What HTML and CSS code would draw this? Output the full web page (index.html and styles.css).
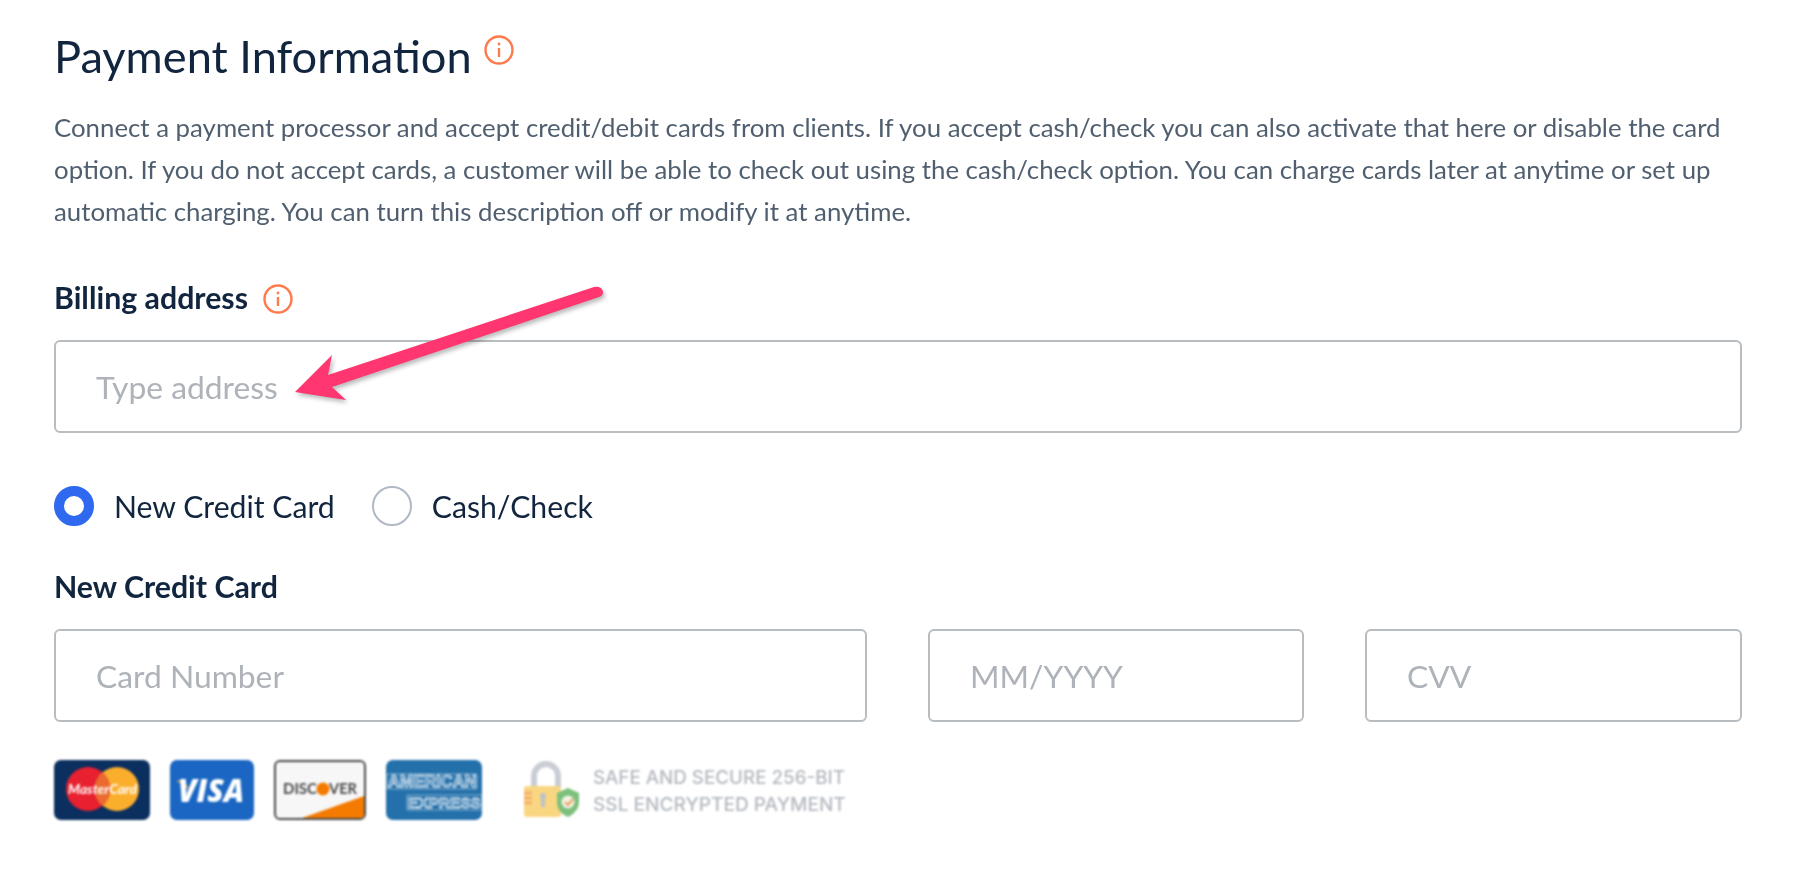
FILE: index.html
```html
<!doctype html>
<html>
	<head>
		<meta charset="utf-8" />
		<title>Payment Information</title>
		<link rel="stylesheet" href="styles.css">
	</head>
	<body>
		<div class="panel">
			<h1 class="title">Payment Information
				<svg class="info info-title" viewBox="0 0 30 30"><circle cx="15" cy="15" r="13.5"/><path d="M15 13v9"/><circle class="dot" cx="15" cy="9" r="1.4"/></svg>
			</h1>
			<p class="desc">Connect a payment processor and accept credit/debit cards from clients. If you accept cash/check you can also activate that here or disable the card option. If you do not accept cards, a customer will be able to check out using the cash/check option. You can charge cards later at anytime or set up automatic charging. You can turn this description off or modify it at anytime.</p>

			<div class="label label-billing">Billing address
				<svg class="info" viewBox="0 0 30 30"><circle cx="15" cy="15" r="13.5"/><path d="M15 13v9"/><circle class="dot" cx="15" cy="9" r="1.4"/></svg>
			</div>
			<input class="field" type="text" placeholder="Type address">

			<div class="radios">
				<label class="radio"><span class="dot-btn on"></span>New Credit Card</label>
				<label class="radio"><span class="dot-btn"></span>Cash/Check</label>
			</div>

			<div class="label">New Credit Card</div>
			<div class="card-row">
				<input class="field" type="text" placeholder="Card Number">
				<input class="field" type="text" placeholder="MM/YYYY">
				<input class="field" type="text" placeholder="CVV">
			</div>

			<div class="logos">
				<svg class="logo logo-mc" viewBox="0 0 96 60">
					<rect width="96" height="60" rx="7" fill="#0b2f5f"/>
					<circle cx="34" cy="29" r="22" fill="#e8202f"/>
					<circle cx="63" cy="29" r="22" fill="#fbae2c"/>
					<path d="M48.500 12a22 22 0 0 1 0 34a22 22 0 0 1 0-34z" fill="#ea6a30"/>
					<text x="14" y="34" textLength="69" lengthAdjust="spacingAndGlyphs" class="mc-text">MasterCard</text>
				</svg>
				<svg class="logo logo-visa" viewBox="0 0 84 60">
					<rect width="84" height="60" rx="7" fill="#1a66c2"/>
					<path d="M6 21c6-1 11 1 13 9c-3-4-7-7-13-9z" fill="#f0b040"/>
					<text x="8" y="42" textLength="66" lengthAdjust="spacingAndGlyphs" class="visa-text">VISA</text>
				</svg>
				<svg class="logo logo-disc" viewBox="0 0 92 60">
					<rect x="1" y="1" width="90" height="58" rx="5" fill="#f7f7f7" stroke="#4a4a4a" stroke-width="2"/>
					<path d="M28 58L90 36v18q0 4-4 4z" fill="#f47a00"/>
					<text x="9" y="34" textLength="34" lengthAdjust="spacingAndGlyphs" class="disc-text">DISC</text>
					<circle cx="49" cy="29" r="6.500" fill="#f47a00"/>
					<text x="55" y="34" textLength="28" lengthAdjust="spacingAndGlyphs" class="disc-text">VER</text>
				</svg>
				<svg class="logo logo-amex" viewBox="0 0 96 60">
					<rect width="96" height="60" rx="7" fill="#2470ab"/>
					<path d="M1 14h90v15H1zM21 35h75v15H21z" fill="none" stroke="#e8f0f6" stroke-width="1" opacity=".5"/>
					<text x="2" y="27" class="amex-text amex-top">AMERICAN</text>
					<text x="22" y="48" class="amex-text amex-bottom">EXPRESS</text>
				</svg>
				<div class="secure">
					<svg class="lock" viewBox="0 0 58 58">
						<path d="M11 28V16a12 12 0 0 1 24 0v12" fill="none" stroke="#c9cdd5" stroke-width="6"/>
						<rect x="1" y="26" width="37" height="31" rx="3" fill="#f9d682"/>
						<path d="M1 33h8M1 38h8M1 43h8" stroke="#f4b06c" stroke-width="3"/>
						<circle cx="20" cy="36" r="3" fill="#bcc2c8"/>
						<path d="M20 36v11" stroke="#bcc2c8" stroke-width="4"/>
						<path d="M45 28l11 5v9c0 7-5 12-11 15c-7-3-11-8-11-15v-9z" fill="#7cc07c"/>
						<circle cx="45" cy="42" r="6.500" fill="#f4f1e4"/>
						<path d="M42 42l3 3l5-6" fill="none" stroke="#e8a060" stroke-width="2"/>
					</svg>
					<div class="secure-text">SAFE AND SECURE 256-BIT<br><span class="secure-line">SSL ENCRYPTED PAYMENT</span></div>
				</div>
			</div>

			<svg class="arrow" viewBox="0 0 320 125">
				<path d="M5 107L42 70L38 90L304 2Q312 1 313 7Q313 11 309 12L42 102L56 115z" fill="#ff3670"/>
			</svg>
		</div>
	</body>
</html>
```

FILE: styles.css
```css
html, body, div, h1, p { margin: 0; padding: 0; }
body { background: #fff; font-family: Lato, "Liberation Sans", sans-serif; color: #11253f; }
.panel { position: relative; height: 878px; box-sizing: border-box; padding: 28px 68px 0 54px; overflow: hidden; filter: blur(0.5px); }

.title { font-size: 45.200px; line-height: 56px; font-weight: 400; }
.desc { margin-top: 22px; font-size: 25.800px; line-height: 42px; color: #505f6f; }

.info { width: 30px; height: 30px; margin-left: 8px; vertical-align: -5px; fill: none; stroke: #ff7a4d; stroke-width: 2.400; }
.info .dot { fill: #ff7a4d; stroke: none; }
.info-title { vertical-align: 8px; margin-left: 1px; }

.label { font-size: 30.300px; line-height: 36px; font-weight: 700; }
.label-billing { margin-top: 47px; margin-bottom: 25px; }

.field { display: block; box-sizing: border-box; width: 100%; height: 93px; padding: 0 40px; background: #fff; border: 2px solid #b8bdc1; border-radius: 6px; font-family: inherit; font-size: 31.800px; color: #11253f; outline: none; }
.field::placeholder { color: #adb3b9; opacity: 1; }

.radios { display: flex; gap: 37px; margin-top: 53px; margin-bottom: 42px; }
.radio { display: flex; align-items: center; gap: 20px; font-size: 30.200px; line-height: 40px; }
.dot-btn { box-sizing: border-box; width: 40px; height: 40px; border: 2px solid #b0b8c4; border-radius: 50%; }
.dot-btn.on { border: 10px solid #2f69f0; }

.card-row { display: grid; grid-template-columns: 813px 376px 377px; gap: 61px; margin-top: 25px; }

.logos { display: flex; align-items: flex-start; gap: 20px; margin-top: 38px; filter: blur(0.9px); }
.logo { display: block; height: 60px; }
.logo-mc, .logo-amex { width: 96px; }
.logo-visa { width: 84px; }
.logo-disc { width: 92px; }
.mc-text { font: italic 700 14px Lato, sans-serif; fill: #fff; }
.visa-text { font: italic 800 32px "Open Sans", sans-serif; fill: #fff; }
.disc-text { font: 700 15px Lato, sans-serif; fill: #4a4a4a; }
.amex-text { font-family: "Liberation Sans", sans-serif; font-weight: 700; fill: #2470ab; stroke: #f2f6fa; stroke-width: 0.9; }
.amex-top { font-size: 16.400px; }
.amex-bottom { font-size: 15.400px; }

.secure { display: flex; align-items: flex-start; gap: 12px; margin-left: 21px; }
.lock { display: block; width: 58px; height: 58px; }
.secure-text { font-family: Inter, sans-serif; font-size: 18.800px; font-weight: 500; line-height: 27px; color: #b4b9bf; white-space: nowrap; padding-top: 4px; }
.secure-line { font-size: 19.100px; }

/* annotation on top of the form */
.arrow { position: absolute; left: 290px; top: 285px; width: 320px; height: 125px; filter: drop-shadow(2px 3px 2px rgba(60, 60, 60, .35)); }
```
